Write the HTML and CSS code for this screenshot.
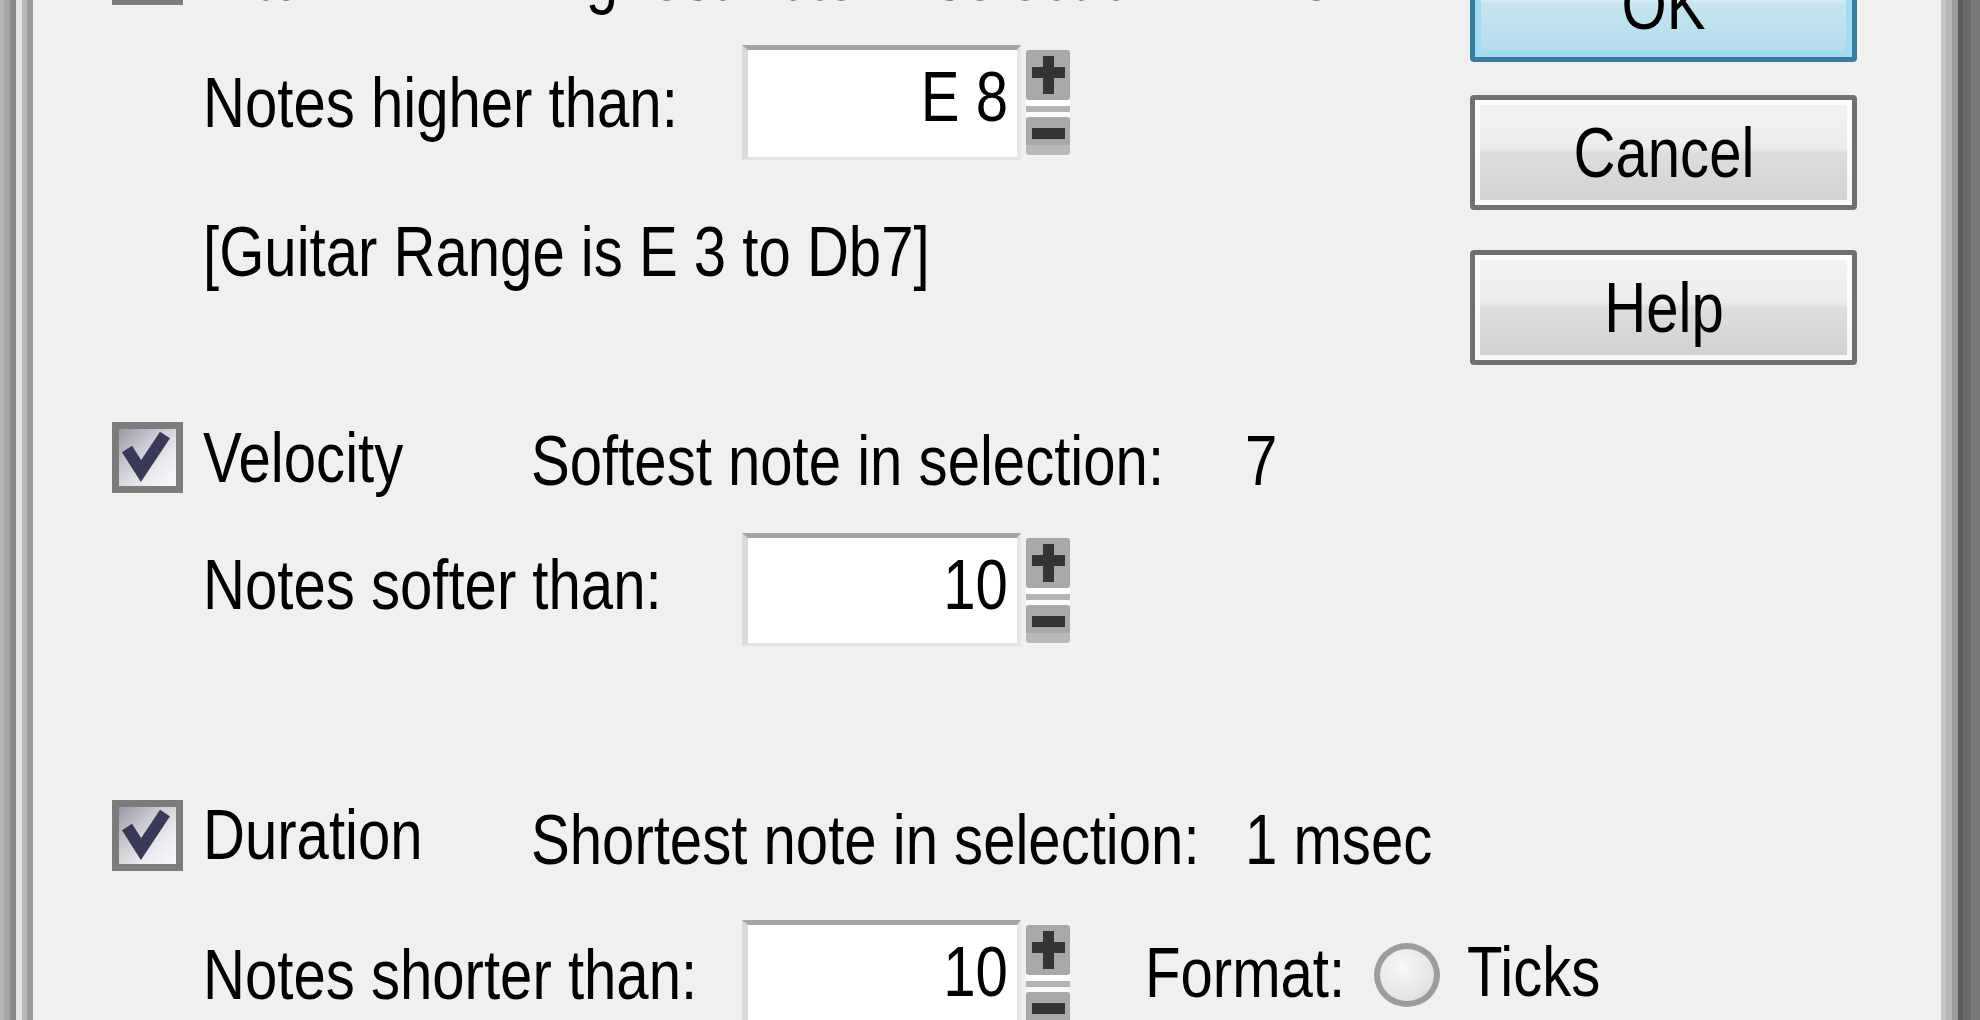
FILE: index.html
```html
<!DOCTYPE html>
<html>
<head>
<meta charset="utf-8">
<title>Deglitch</title>
<link rel="stylesheet" href="styles.css">
</head>
<body>
<div class="window">
  <div class="frame-left"></div>
  <div class="client">
    <div class="options">
      <div class="check-row row-top">
        <span class="checkbox"><svg class="tick" viewBox="0 0 57 57"><polyline points="8,20 22,42 46,6"/></svg></span>
        <span class="check-label"><span class="t">Pitch</span></span>
        <span class="info"><span class="t">Highest note in selection:</span></span>
        <span class="value"><span class="t">E 8</span></span>
      </div>
      <div class="field-row row-a">
        <span class="field-label"><span class="t">Notes higher than:</span></span>
        <span class="field"><span class="t">E 8</span></span>
        <span class="spin">
          <span class="spin-btn spin-up"><svg class="plus" viewBox="0 0 33 38"><rect x="0" y="11" width="33" height="11"/><rect x="11" y="0" width="11" height="38"/></svg></span>
          <span class="spin-sep"></span>
          <span class="spin-btn spin-down"><svg class="minus" viewBox="0 0 33 11"><rect x="0" y="0" width="33" height="11"/></svg></span>
        </span>
      </div>
      <div class="note"><span class="t">[Guitar Range is E 3 to Db7]</span></div>
      <div class="check-row row-c">
        <span class="checkbox"><svg class="tick" viewBox="0 0 57 57"><polyline points="8,20 22,42 46,6"/></svg></span>
        <span class="check-label"><span class="t">Velocity</span></span>
        <span class="info"><span class="t">Softest note in selection:</span></span>
        <span class="value"><span class="t">7</span></span>
      </div>
      <div class="field-row row-d">
        <span class="field-label"><span class="t">Notes softer than:</span></span>
        <span class="field"><span class="t">10</span></span>
        <span class="spin">
          <span class="spin-btn spin-up"><svg class="plus" viewBox="0 0 33 38"><rect x="0" y="11" width="33" height="11"/><rect x="11" y="0" width="11" height="38"/></svg></span>
          <span class="spin-sep"></span>
          <span class="spin-btn spin-down"><svg class="minus" viewBox="0 0 33 11"><rect x="0" y="0" width="33" height="11"/></svg></span>
        </span>
      </div>
      <div class="check-row row-e">
        <span class="checkbox"><svg class="tick" viewBox="0 0 57 57"><polyline points="8,20 22,42 46,6"/></svg></span>
        <span class="check-label"><span class="t">Duration</span></span>
        <span class="info"><span class="t">Shortest note in selection:</span></span>
        <span class="value"><span class="t">1 msec</span></span>
      </div>
      <div class="field-row row-f">
        <span class="field-label"><span class="t">Notes shorter than:</span></span>
        <span class="field"><span class="t">10</span></span>
        <span class="spin">
          <span class="spin-btn spin-up"><svg class="plus" viewBox="0 0 33 38"><rect x="0" y="11" width="33" height="11"/><rect x="11" y="0" width="11" height="38"/></svg></span>
          <span class="spin-sep"></span>
          <span class="spin-btn spin-down"><svg class="minus" viewBox="0 0 33 11"><rect x="0" y="0" width="33" height="11"/></svg></span>
        </span>
        <span class="format-label"><span class="t">Format:</span></span>
        <span class="radio"></span>
        <span class="radio-label"><span class="t">Ticks</span></span>
      </div>
    </div>
    <div class="buttons">
      <div class="btn btn-default"><span class="t">OK</span></div>
      <div class="btn btn-cancel"><span class="t">Cancel</span></div>
      <div class="btn btn-help"><span class="t">Help</span></div>
    </div>
  </div>
  <div class="frame-right"></div>
</div>
</body>
</html>
```
FILE: styles.css
```css
html, body {
  margin: 0;
  padding: 0;
  width: 1980px;
  height: 1020px;
  overflow: hidden;
  background: #f0f0f0;
}

body {
  font-family: "Liberation Sans", Arial, sans-serif;
  font-size: 70px;
  line-height: 80px;
  color: #000;
  white-space: nowrap;
}

/* narrow, tall glyphs like the enlarged bitmap dialog font */
.t {
  display: inline-block;
  transform: scaleX(0.83);
  transform-origin: 0 0;
}

.window {
  display: flex;
  height: 1020px;
}

.frame-left {
  flex: none;
  width: 33px;
  background: linear-gradient(to right,
    #b4b4b4 0 4px, #a4a4a4 4px 10px, #8a8a8a 10px 16px,
    #e4e4e4 16px 22px, #b8b8b8 22px 27px, #9c9c9c 27px 33px);
}

.frame-right {
  flex: none;
  width: 39px;
  background: linear-gradient(to right,
    #c6c6c6 0 5px, #b6b6b6 5px 11px, #9c9c9c 11px 17px,
    #5c5c5c 17px 22px, #6c6c6c 22px 30px, #7a7a7a 30px 39px);
}

.client {
  flex: 1;
  display: flex;
  overflow: hidden;
}

/* ---------- option rows ---------- */
.options {
  flex: none;
  width: 1437px;
  box-sizing: border-box;
  padding-left: 79px;
  margin-top: -66px;
  display: flex;
  flex-direction: column;
}

.check-row {
  display: flex;
  align-items: flex-start;
  height: 71px;
  flex: none;
}

.checkbox {
  flex: none;
  width: 71px;
  height: 71px;
  box-sizing: border-box;
  border: 7px solid #7c7c7c;
  background: linear-gradient(135deg, #9a9aa2 0%, #c8c8d0 35%, #ececf2 70%, #f8f8fc 100%);
  display: flex;
}

.tick {
  width: 57px;
  height: 57px;
}

.tick polyline {
  fill: none;
  stroke: #3a3a58;
  stroke-width: 12;
  stroke-linejoin: miter;
}

.check-label {
  flex: none;
  margin-left: 20px;
  width: 328px;
  margin-top: -4px;
}

.info {
  flex: none;
  width: 714px;
  margin-top: -1px;
}

.value {
  flex: none;
  margin-top: -1px;
}

.row-top .check-label,
.row-top .info,
.row-top .value { margin-top: 2px; }

.row-c { margin-top: 130px; }
.row-e { margin-top: 154px; }
.row-e .check-label { margin-top: -5px; }
.row-e .info, .row-e .value { margin-top: 0; }

.field-row {
  display: flex;
  align-items: flex-start;
  margin-left: 91px;
  flex: none;
}

.field-label {
  width: 539px;
  flex: none;
}

.field {
  flex: none;
  width: 279px;
  height: 113px;
  box-sizing: border-box;
  border-top: 5px solid #a4a4a4;
  border-left: 6px solid #dadada;
  border-right: 4px solid #e6e6e6;
  border-bottom: 3px solid #e2e2e2;
  background: #fff;
  padding: 7px 9px 0 0;
  text-align: right;
}

.field .t { transform-origin: 100% 0; }

.spin {
  flex: none;
  width: 44px;
  height: 105px;
  margin-left: 5px;
  margin-top: 5px;
  display: flex;
  flex-direction: column;
}

.spin-btn {
  background: #a8a8a8;
  border-radius: 3px;
  display: flex;
  justify-content: center;
}

.spin-up {
  height: 50px;
  align-items: center;
}

.spin-down {
  height: 38px;
  align-items: flex-start;
  padding-top: 11px;
  box-sizing: border-box;
  background: linear-gradient(#a8a8a8 0 75%, #b8b8b8 75%);
}

.spin-sep {
  height: 17px;
  background: linear-gradient(#ffffff 0 6px, #b4b4b4 6px 12px, #fafafa 12px);
}

.plus { width: 33px; height: 38px; }
.minus { width: 33px; height: 11px; }
.plus rect, .minus rect { fill: #343434; }

.row-a { margin-top: 40px; height: 115px; }
.row-a .field-label { margin-top: 18px; }
.row-a .field { height: 115px; }

.row-d { margin-top: 40px; height: 113px; }
.row-d .field-label { margin-top: 12px; }

.row-f { margin-top: 49px; height: 113px; }
.row-f .field-label { margin-top: 15px; }

.note {
  margin-left: 91px;
  margin-top: 52px;
  height: 80px;
  flex: none;
}

.format-label {
  margin-left: 75px;
  margin-top: 13px;
  width: 229px;
  flex: none;
}

.radio {
  flex: none;
  width: 66px;
  height: 64px;
  margin-top: 23px;
  box-sizing: border-box;
  border: 6px solid #9c9c9c;
  border-radius: 50%;
  background: radial-gradient(circle at 40% 35%, #f8f8f8 0%, #e6e6e6 60%, #d4d4d4 100%);
}

.radio-label {
  flex: none;
  margin-left: 27px;
  margin-top: 12px;
}

/* ---------- buttons ---------- */
.buttons {
  flex: none;
  width: 387px;
  margin-top: -53px;
  display: flex;
  flex-direction: column;
}

.btn {
  flex: none;
  height: 115px;
  box-sizing: border-box;
  border: 5px solid #707070;
  border-radius: 4px;
  display: flex;
  align-items: center;
  justify-content: center;
  box-shadow: inset 0 0 0 5px rgba(255, 255, 255, 0.85);
  background: linear-gradient(#f3f3f3 0%, #ececec 45%, #dedede 50%, #d0d0d0 100%);
}

.btn .t { transform-origin: 50% 0; }

.btn-default {
  border-color: #3a7d9c;
  box-shadow: inset 0 0 0 6px #9fdcf0;
  background: linear-gradient(#e6f4fa 0%, #dbeef6 45%, #c7e4f0 50%, #b2dbec 100%);
}

.btn-cancel { margin-top: 33px; }
.btn-help { margin-top: 40px; }
```
